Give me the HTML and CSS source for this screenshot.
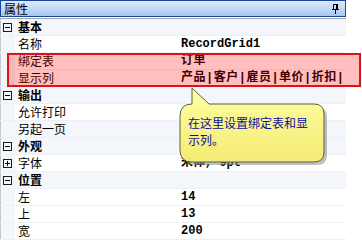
FILE: index.html
```html
<!DOCTYPE html>
<html lang="zh">
<head>
    <meta charset="UTF-8">
    <title>属性</title>
    <link rel="stylesheet" href="styles.css">
</head>
<body>
    <div class="panel">
        <div class="titlebar">
            <span class="title">属性</span>
            <svg class="pin" width="7" height="10" viewBox="0 0 7 10">
                <path d="M1.5 0.5h4v5h-4z" fill="none" stroke="#000"/>
                <rect x="4" y="0" width="2" height="6" fill="#000"/>
                <rect x="0" y="5" width="7" height="1" fill="#000"/>
                <rect x="3" y="6" width="1" height="4" fill="#000"/>
            </svg>
        </div>
        <div class="rule"></div>

        <div class="grid">
            <div class="row cat"><i class="toggle minus"></i><span>基本</span></div>
            <div class="row prop"><span class="name">名称</span><span class="value">RecordGrid1</span></div>
            <div class="row prop"><span class="name">绑定表</span><span class="value wide">订单</span></div>
            <div class="row prop"><span class="name">显示列</span><span class="value wide">产品|客户|雇员|单价|折扣|</span></div>
            <div class="row cat"><i class="toggle minus"></i><span>输出</span></div>
            <div class="row prop"><span class="name">允许打印</span><span class="value"></span></div>
            <div class="row prop soft"><span class="name">另起一页</span><span class="value"></span></div>
            <div class="row cat"><i class="toggle minus"></i><span>外观</span></div>
            <div class="row prop plus-row"><i class="toggle plus"></i><span class="name">字体</span><span class="value">宋体, 9pt</span></div>
            <div class="row cat"><i class="toggle minus"></i><span>位置</span></div>
            <div class="row prop"><span class="name">左</span><span class="value">14</span></div>
            <div class="row prop"><span class="name">上</span><span class="value">13</span></div>
            <div class="row prop"><span class="name">宽</span><span class="value">200</span></div>
        </div>
    </div>

    <!-- 红框标注 -->
    <div class="highlight"></div>

    <!-- 提示气泡 -->
    <div class="callout">
        <svg class="bubble" width="152" height="84" viewBox="0 0 152 84">
            <defs>
                <linearGradient id="tipFill" x1="0" y1="0" x2="0" y2="1">
                    <stop offset="0" stop-color="#ffffa6"/>
                    <stop offset="1" stop-color="#f3eb72"/>
                </linearGradient>
            </defs>
            <path transform="translate(3,3)" fill="#8c8c8c" opacity="0.55"
                  d="M14 2 L31 18 L136 18 Q146 18 146 28 L146 66 Q146 76 136 76 L14 76 Q2 76 2 64 L2 30 Q2 18 14 18 Z"/>
            <path fill="url(#tipFill)" stroke="#5f5f45"
                  d="M14 2 L31 18 L136 18 Q146 18 146 28 L146 66 Q146 76 136 76 L14 76 Q2 76 2 64 L2 30 Q2 18 14 18 Z"/>
        </svg>
        <p class="tip-text">在这里设置绑定表和显示列。</p>
    </div>
</body>
</html>
```

FILE: styles.css
```css
/* Reset */
* {
    margin: 0;
    padding: 0;
    box-sizing: border-box;
}

body {
    background: #fff;
    font-family: "Noto Sans CJK SC", "Liberation Sans", sans-serif;
    font-size: 12px;
    color: #000;
    width: 362px;
    height: 240px;
    overflow: hidden;
    position: relative;
}

.panel {
    width: 346px;
}

/* 标题栏 */
.titlebar {
    height: 17px;
    border: 1px solid #17479a;
    background: linear-gradient(#dfeafa, #a8c7ef);
    display: flex;
    align-items: center;
    justify-content: space-between;
    padding: 0 6px 0 3px;
}

.title {
    line-height: 15px;
}

.pin {
    display: block;
}

.rule {
    height: 1px;
    margin-top: 1px;
    background: #a3a3a3;
}

/* 属性表格 */
.row {
    height: 17px;
    display: flex;
    align-items: center;
    border-bottom: 1px solid #edf0f6;
    line-height: 16px;
    background: linear-gradient(to right, #c4c8d0 1px, #f3f6fb 1px, #f3f6fb 15px, #fff 15px);
}

.cat {
    background: linear-gradient(to right, #c4c8d0 1px, #f3f6fb 1px);
    font-weight: bold;
    padding-left: 3px;
}

.prop {
    padding-left: 18px;
}

.soft {
    background: linear-gradient(to right, #c4c8d0 1px, #f3f6fb 1px);
}

.plus-row {
    padding-left: 3px;
}

.name {
    width: 163px;
    flex-shrink: 0;
}

.value {
    font-family: "Liberation Mono", "Noto Sans CJK SC", monospace;
    font-weight: bold;
    white-space: nowrap;
}

.wide {
    letter-spacing: 0.5px;
}

/* 展开/折叠框 */
.toggle {
    width: 9px;
    height: 9px;
    border: 1px solid #1a1a1a;
    position: relative;
    margin-right: 6px;
    flex-shrink: 0;
}

.toggle::before {
    content: "";
    position: absolute;
    left: 1px;
    top: 3px;
    width: 5px;
    height: 1px;
    background: #000;
}

.plus::after {
    content: "";
    position: absolute;
    left: 3px;
    top: 1px;
    width: 1px;
    height: 5px;
    background: #000;
}

/* 红框 */
.highlight {
    position: absolute;
    left: 7px;
    top: 53px;
    width: 354px;
    height: 34px;
    border: 2px solid #e01212;
    background: rgba(255, 0, 0, 0.25);
}

/* 气泡 */
.callout {
    position: absolute;
    left: 178px;
    top: 86px;
    width: 152px;
    height: 84px;
}

.bubble {
    position: absolute;
    left: 0;
    top: 0;
}

.tip-text {
    position: absolute;
    left: 10px;
    top: 28px;
    width: 122px;
    line-height: 17px;
    color: #0c0c9c;
}
```
